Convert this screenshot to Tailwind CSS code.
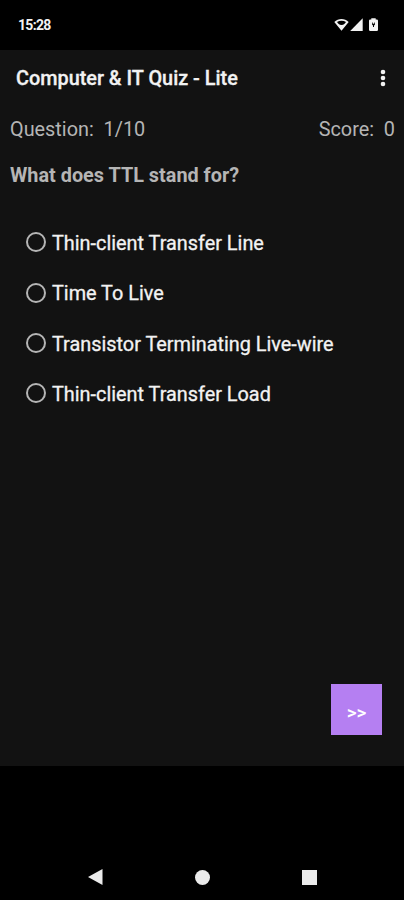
<!DOCTYPE html>
<html lang="en">

<head>
    <meta charset="UTF-8">
    <meta name="viewport" content="width=device-width, initial-scale=1.0">
    <title>Computer &amp; IT Quiz - Lite</title>
    <script src="https://cdn.jsdelivr.net/npm/@tailwindcss/browser@4"></script>
</head>

<body class="bg-black">

    <div class="flex flex-col w-[404px] h-[900px] overflow-hidden bg-black font-[Roboto,sans-serif] text-[19.85px] leading-6 text-[#f2f2f2]">

        <!-- Status bar -->
        <div class="flex items-center justify-between h-[50px] pl-[18px] pr-[24px]">
            <p class="text-[14px] font-bold tracking-[-0.7px]">15:28</p>
            <svg class="w-[46px] h-4" viewBox="0 0 46 16" fill="#f2f2f2">
                <path fill-rule="evenodd" d="M0.3 5C4.3 1 10.7 1 14.700 5L7.500 13.800ZM3 5L4.400 6.700C6.200 8.300 8.800 8.300 10.600 6.700L12 5C9.300 3.200 5.700 3.200 3 5Z" />
                <path d="M28.700 1.200V14H16.200Z" />
                <path fill-rule="evenodd" d="M37.300 2.600V1.200H41.700V2.600H42.800Q44 2.600 44 3.800V12.800Q44 14 42.800 14H36.200Q35 14 35 12.800V3.800Q35 2.600 36.200 2.600ZM38 5.500V7.500L39 8.500V10H40V8.500L41 7.500V5.500H40.300V6.800H38.700V5.500Z" />
            </svg>
        </div>

        <main class="flex flex-col h-[716px] bg-[#121212]">
            <!-- Title bar -->
            <div class="flex items-center justify-between h-[57px] pl-4 pr-[18px] pb-[2px]">
                <h1 class="pt-[2px] font-medium [-webkit-text-stroke:0.3px_#f2f2f2]">Computer &amp; IT Quiz - Lite</h1>
                <svg class="w-[6px] h-[18px]" viewBox="0 0 6 18" fill="#f2f2f2">
                    <circle cx="3" cy="3" r="2.3" />
                    <circle cx="3" cy="9" r="2.3" />
                    <circle cx="3" cy="15" r="2.3" />
                </svg>
            </div>

            <div class="flex justify-between pt-[11px] pl-[10px] pr-[9px] text-[#b5b5b5] whitespace-pre">
                <p>Question:  1/10</p>
                <p>Score:  0</p>
            </div>

            <p class="pt-[22px] px-[10px] font-bold text-[#b5b5b5]">What does TTL stand for?</p>

            <!-- Answers -->
            <form class="flex flex-col pt-[29.3px] pl-[26px] [-webkit-text-stroke:0.3px_#f2f2f2]">
                <label class="flex items-center h-[50.3px] gap-[6px]">
                    <input type="radio" name="answer" class="appearance-none size-5 rounded-full border-2 border-[#b5b5b5]">
                    <span class="pt-[3px]">Thin-client Transfer Line</span>
                </label>
                <label class="flex items-center h-[50.3px] gap-[6px]">
                    <input type="radio" name="answer" class="appearance-none size-5 rounded-full border-2 border-[#b5b5b5]">
                    <span class="pt-[3px]">Time To Live</span>
                </label>
                <label class="flex items-center h-[50.3px] gap-[6px]">
                    <input type="radio" name="answer" class="appearance-none size-5 rounded-full border-2 border-[#b5b5b5]">
                    <span class="pt-[3px]">Transistor Terminating Live-wire</span>
                </label>
                <label class="flex items-center h-[50.3px] gap-[6px]">
                    <input type="radio" name="answer" class="appearance-none size-5 rounded-full border-2 border-[#b5b5b5]">
                    <span class="pt-[3px]">Thin-client Transfer Load</span>
                </label>
            </form>

            <button class="mt-auto ml-auto mr-[22px] mb-[31px] w-[51px] h-[51px] pt-[6px] bg-[#b57ff2] text-[19px] font-medium text-white">&gt;&gt;</button>
        </main>

        <!-- Navigation bar -->
        <div class="flex items-center justify-between mt-auto h-[46px] pl-[88px] pr-[87px]">
            <svg class="w-[15px] h-4" viewBox="0 0 15 16" fill="#ebebeb">
                <path d="M0 8L14.5 0V16Z" />
            </svg>
            <div class="size-[15px] rounded-full bg-[#ebebeb]"></div>
            <div class="size-[15px] bg-[#ebebeb]"></div>
        </div>
    </div>

</body>

</html>
